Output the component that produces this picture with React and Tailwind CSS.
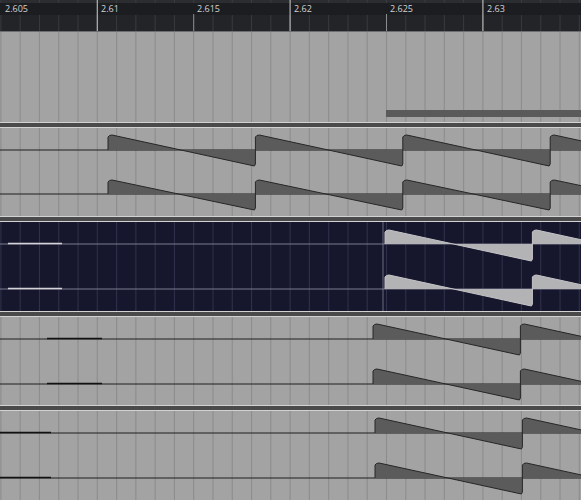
import React from 'react'

const W = 581
const X0 = 0.9
const STEP = 19.28
const PERIOD = 147.4

const gridXs = Array.from({ length: 31 }, (_, k) => X0 + STEP * k)

const labels = [
  { text: '2.605', x: 5 },
  { text: '2.61', x: 101 },
  { text: '2.615', x: 197 },
  { text: '2.62', x: 294 },
  { text: '2.625', x: 390 },
  { text: '2.63', x: 487 },
]

function Ruler() {
  return (
    <div className="relative h-[32px] w-full bg-[#222327] shrink-0">
      <svg width={W} height={32} className="absolute inset-0 block">
        <rect x="0" y="0" width={W} height="3" fill="#2c2d31" />
        <rect x="0" y="3" width={W} height="12" fill="#1c1d20" />
        <rect x="0" y="15" width={W} height="16" fill="#232428" />
        <rect x="0" y="31" width={W} height="1" fill="#6e6e70" />
        {gridXs.map((x, i) => (
          <g key={i}>
            <line x1={x} x2={x} y1="0" y2="3" stroke="#3b3c40" />
            <line x1={x} x2={x} y1="15" y2="31" stroke="#393a3e" />
          </g>
        ))}
        {[X0 + STEP * 5, X0 + STEP * 15, X0 + STEP * 25].map((x) => (
          <line key={x} x1={x} x2={x} y1="0" y2="31" stroke="#b4b4b4" strokeWidth="1.2" />
        ))}
        {[X0 + STEP * 10, X0 + STEP * 20].map((x) => (
          <line key={x} x1={x} x2={x} y1="14" y2="31" stroke="#8c8c8e" />
        ))}
      </svg>
      {labels.map((l) => (
        <span
          key={l.text}
          className="absolute top-[2px] text-[9px] leading-[14px] text-[#d2d2d2] font-['Open_Sans',sans-serif]"
          style={{ left: l.x }}
        >
          {l.text}
        </span>
      ))}
    </div>
  )
}

function Separator() {
  return <div className="h-[6px] w-full shrink-0 border-y border-[#d2d2d2] bg-[#4a4a4a]" />
}

function sawPath(s, c, up, down) {
  return `M${s},${c} L${s},${c - up + 2} Q${s + 1},${c - up} ${s + 4},${c - up} L${s + PERIOD - 1},${c + down} L${s + PERIOD},${c + down - 2} L${s + PERIOD},${c} Z`
}

function sawStroke(s, c, up, down) {
  return `M${s},${c} L${s},${c - up + 2} Q${s + 1},${c - up} ${s + 4},${c - up} L${s + PERIOD - 1},${c + down} L${s + PERIOD},${c + down - 2} L${s + PERIOD},${c}`
}

function Track({ h, dark = false, channels = [], extra = null }) {
  const bg = dark ? '#16172c' : '#a3a3a3'
  const grid = dark ? '#2f3049' : '#8d8d8d'
  return (
    <div className={`w-full shrink-0 overflow-hidden ${dark ? 'bg-[#16172c]' : 'bg-[#a3a3a3]'}`} style={{ height: h }}>
      <svg width={W} height={h} className="block">
        <rect x="0" y="0" width={W} height={h} fill={bg} />
        {gridXs.map((x, i) => (
          <line key={i} x1={x} x2={x} y1="0" y2={h} stroke={grid} strokeWidth="1.1" />
        ))}
        {extra}
        {channels.map((ch, i) => (
          <g key={i}>
            <line
              x1="0"
              x2={W}
              y1={ch.c}
              y2={ch.c}
              stroke={dark ? '#7b7c92' : '#1e1e1e'}
              strokeWidth="1"
            />
            {ch.seg && (
              <line
                x1={ch.seg[0]}
                x2={ch.seg[1]}
                y1={ch.c - 0.5}
                y2={ch.c - 0.5}
                stroke={dark ? '#d4d4d8' : '#111111'}
                strokeWidth="1.6"
              />
            )}
            {ch.starts.map((s) => (
              <g key={s}>
                <path
                  d={sawPath(s, ch.c, ch.up, ch.down)}
                  fill={dark ? '#b3b3b6' : '#5b5b5b'}
                  stroke="none"
                />
                <path
                  d={sawStroke(s, ch.c, ch.up, ch.down)}
                  fill="none"
                  stroke={dark ? '#c4c4c8' : '#262626'}
                  strokeWidth="1"
                />
              </g>
            ))}
          </g>
        ))}
      </svg>
    </div>
  )
}

export default function App() {
  return (
    <div className="w-[581px] h-[500px] overflow-hidden flex flex-col bg-[#a3a3a3]">
      <Ruler />
      <Track
        h={90}
        extra={<rect x="386" y="78" width={W - 386} height="7" fill="#5a5a5a" />}
      />
      <Separator />
      <Track
        h={88}
        channels={[
          { c: 22, up: 15, down: 16, starts: [108, 108 + PERIOD, 108 + PERIOD * 2, 108 + PERIOD * 3] },
          { c: 66, up: 14, down: 16, starts: [108, 108 + PERIOD, 108 + PERIOD * 2, 108 + PERIOD * 3] },
        ]}
      />
      <Separator />
      <Track
        h={89}
        dark
        extra={<line x1="383" x2="383" y1="0" y2="89" stroke="#6a6b80" strokeWidth="1" />}
        channels={[
          { c: 22, up: 14, down: 17, seg: [8, 62], starts: [385, 385 + PERIOD] },
          { c: 67, up: 14, down: 17, seg: [8, 62], starts: [385, 385 + PERIOD] },
        ]}
      />
      <Separator />
      <Track
        h={88}
        channels={[
          { c: 22, up: 15, down: 16, seg: [47, 102], starts: [373, 373 + PERIOD] },
          { c: 67, up: 15, down: 16, seg: [47, 102], starts: [373, 373 + PERIOD] },
        ]}
      />
      <Separator />
      <Track
        h={89}
        channels={[
          { c: 22, up: 15, down: 16, seg: [0, 51], starts: [375, 375 + PERIOD] },
          { c: 67, up: 15, down: 16, seg: [0, 51], starts: [375, 375 + PERIOD] },
        ]}
      />
    </div>
  )
}
